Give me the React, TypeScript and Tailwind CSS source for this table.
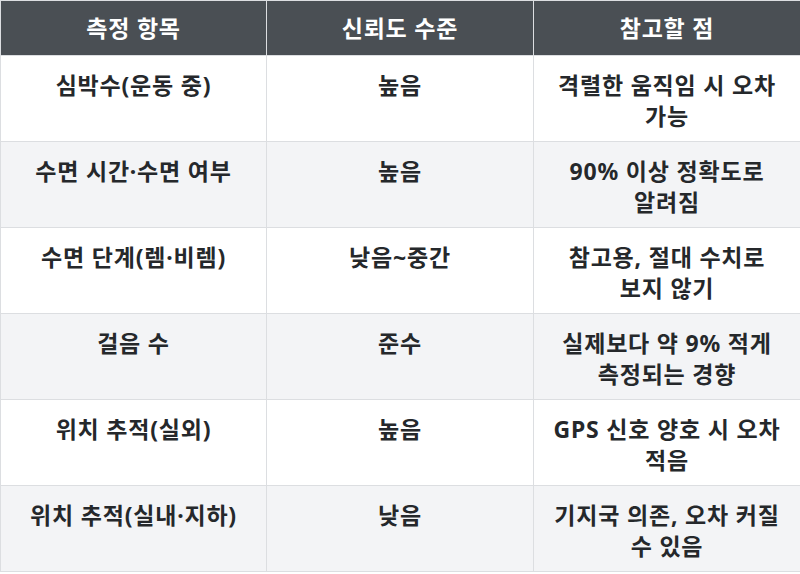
import React from "react";

const rows: [string, string, string][] = [
  ["심박수(운동 중)", "높음", "격렬한 움직임 시 오차 가능"],
  ["수면 시간·수면 여부", "높음", "90% 이상 정확도로 알려짐"],
  ["수면 단계(렘·비렘)", "낮음~중간", "참고용, 절대 수치로 보지 않기"],
  ["걸음 수", "준수", "실제보다 약 9% 적게 측정되는 경향"],
  ["위치 추적(실외)", "높음", "GPS 신호 양호 시 오차 적음"],
  ["위치 추적(실내·지하)", "낮음", "기지국 의존, 오차 커질 수 있음"],
];

export default function App() {
  return (
    <div className="w-[800px] h-[574px] bg-white">
      <table
        className="w-[800px] border-collapse table-fixed text-[23px] leading-[31px] tracking-[0.8px] font-bold text-[#25282b] text-center break-keep"
        style={{ fontFamily: '"Noto Sans", "Noto Sans CJK KR", sans-serif' }}
      >
        <colgroup>
          <col className="w-[266px]" />
          <col className="w-[267px]" />
          <col className="w-[267px]" />
        </colgroup>
        <thead>
          <tr className="bg-[#4a4f54] text-white">
            {["측정 항목", "신뢰도 수준", "참고할 점"].map((h) => (
              <th
                key={h}
                className="border border-[#dcdee1] pt-[12px] pb-[11px] px-4 font-bold"
              >
                {h}
              </th>
            ))}
          </tr>
        </thead>
        <tbody>
          {rows.map((r, i) => (
            <tr key={i} className={i % 2 === 0 ? "bg-white" : "bg-[#f3f4f6]"}>
              {r.map((c, j) => (
                <td
                  key={j}
                  className="border border-[#dcdee1] pt-[14px] pb-[9px] px-4 align-top h-[86px]"
                >
                  {c}
                </td>
              ))}
            </tr>
          ))}
        </tbody>
      </table>
    </div>
  );
}
